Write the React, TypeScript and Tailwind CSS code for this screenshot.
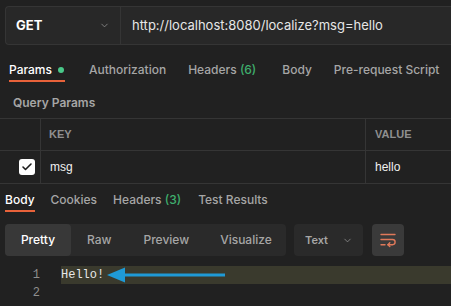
import React from 'react';
import { ChevronDown, Check } from 'lucide-react';

const font = { fontFamily: 'Inter, "Noto Sans", sans-serif' };
const arial = { fontFamily: '"Liberation Sans", Arial, sans-serif' };

function WrapIcon() {
  return (
    <svg width="18" height="16" viewBox="0 0 18 16" fill="none" stroke="#e0795a" strokeWidth="1.4" strokeLinecap="round">
      <path d="M2 2.5h14" />
      <path d="M2 7.5h11.5a2.6 2.6 0 0 1 0 5.2H9" />
      <path d="M10.8 10.8L8.9 12.7l1.9 1.9" />
      <path d="M2 12.7h4" />
    </svg>
  );
}

export default function App() {
  return (
    <div className="w-[451px] h-[306px] overflow-hidden bg-[#212121] text-[#f0f0f0]" style={font}>
      {/* URL bar */}
      <div className="pt-[6px] pl-[5px]">
        <div className="flex h-[39px] rounded-l-[4px] border border-r-0 border-[#353535] bg-[#282828]">
          <div className="flex w-[115px] items-center justify-between border-r border-[#353535] pl-[10px] pr-[10px]">
            <span className="text-[13px] font-bold text-white">GET</span>
            <ChevronDown className="h-[11px] w-[11px] text-[#9a9a9a]" strokeWidth={1.6} />
          </div>
          <div className="flex items-center pl-[11px] text-[13px] text-[#e6e6e6]">http://localhost:8080/localize?msg=hello</div>
        </div>
      </div>

      {/* request tabs */}
      <div className="mt-[13px] flex h-[24px] items-center pl-[9px] text-[12px] font-medium text-[#a6a6a6]">
        <div className="relative flex items-center text-white">
          Params
          <span className="ml-[6px] h-[6px] w-[6px] rounded-full bg-[#49c889]" />
          <span className="absolute left-0 right-[-1px] top-[19px] h-[2px] bg-[#e8623a]" />
        </div>
        <span className="ml-[25px]">Authorization</span>
        <span className="ml-[22px]">
          Headers <span className="text-[#3fae6d]">(6)</span>
        </span>
        <span className="ml-[26px]">Body</span>
        <span className="ml-[22px] whitespace-nowrap">Pre-request Script</span>
      </div>

      <div className="mt-[13px] flex h-[16px] items-center pl-[13px] text-[12px] font-semibold text-[#a6a6a6]">Query Params</div>

      {/* params table */}
      <div className="mt-[7px] border-t border-[#353535]">
        <div className="flex h-[32px] border-b border-[#353535]">
          <div className="w-[41px] border-r border-[#353535]" />
          <div className="flex w-[325px] items-center border-r border-[#353535] pl-[8px] text-[11px] font-bold text-[#8f8f8f]" style={arial}>KEY</div>
          <div className="flex flex-1 items-center pl-[9px] text-[11px] font-bold text-[#8f8f8f]" style={arial}>VALUE</div>
        </div>
        <div className="flex h-[33px] border-b border-[#353535]">
          <div className="flex w-[41px] items-center justify-end border-r border-[#353535] pr-[5px]">
            <div className="flex h-[16px] w-[16px] items-center justify-center rounded-[3px] bg-white">
              <Check className="h-[12px] w-[12px] text-[#1c1c1c]" strokeWidth={3.2} />
            </div>
          </div>
          <div className="flex w-[325px] items-center border-r border-[#353535] pl-[9px] text-[12px] text-[#f0f0f0]" style={arial}>msg</div>
          <div className="flex flex-1 items-center pl-[9px] text-[12px] text-[#f0f0f0]" style={arial}>hello</div>
        </div>
      </div>

      {/* response tabs */}
      <div className="mt-[5px] flex h-[22px] items-center pl-[5px] text-[12px] font-medium text-[#a6a6a6]">
        <div className="relative text-white">
          Body
          <span className="absolute left-0 right-0 top-[19px] h-[2px] bg-[#e8623a]" />
        </div>
        <span className="ml-[16px]">Cookies</span>
        <span className="ml-[16px]">
          Headers <span className="text-[#3fae6d]">(3)</span>
        </span>
        <span className="ml-[17px]">Test Results</span>
      </div>

      {/* toolbar */}
      <div className="mt-[13px] flex h-[32px] items-stretch pl-[5px] text-[12px] font-medium">
        <div className="flex w-[281px] rounded-[4px] bg-[#2a2a2a] text-[#a6a6a6]">
          <div className="flex w-[66px] items-center justify-center rounded-[4px] bg-[#383838] text-white">Pretty</div>
          <span className="ml-[16px] flex items-center">Raw</span>
          <span className="ml-[32px] flex items-center">Preview</span>
          <span className="ml-[31px] flex items-center">Visualize</span>
        </div>
        <div className="ml-[8px] flex w-[69px] items-center justify-between rounded-[4px] bg-[#2a2a2a] pl-[11px] pr-[10px] text-[11px] font-semibold text-[#a6a6a6]">
          Text
          <ChevronDown className="h-[11px] w-[11px] text-[#9a9a9a]" strokeWidth={1.6} />
        </div>
        <div className="ml-[9px] flex w-[32px] items-center justify-center rounded-[4px] bg-[#3a3a3a]">
          <WrapIcon />
        </div>
      </div>

      {/* code */}
      <div className="mt-[10px] text-[12px]" style={{ fontFamily: '"Liberation Mono", "DejaVu Sans Mono", monospace' }}>
        <div className="flex h-[18px] items-center">
          <span className="w-[61px] pr-[21px] text-right text-[#8f8f8f]">1</span>
          <div className="relative flex h-full flex-1 items-center bg-[#3a3a2d] text-[#e8e8e8]">
            Hello!
            <svg className="absolute left-[46px] top-[1px]" width="120" height="16" viewBox="0 0 120 16">
              <path d="M18 6.5H118v3H18z" fill="#1f9ad6" />
              <path d="M0 8L18 0.5v15z" fill="#1f9ad6" />
            </svg>
          </div>
        </div>
        <div className="flex h-[18px] items-center">
          <span className="w-[61px] pr-[21px] text-right text-[#8f8f8f]">2</span>
        </div>
      </div>
    </div>
  );
}
